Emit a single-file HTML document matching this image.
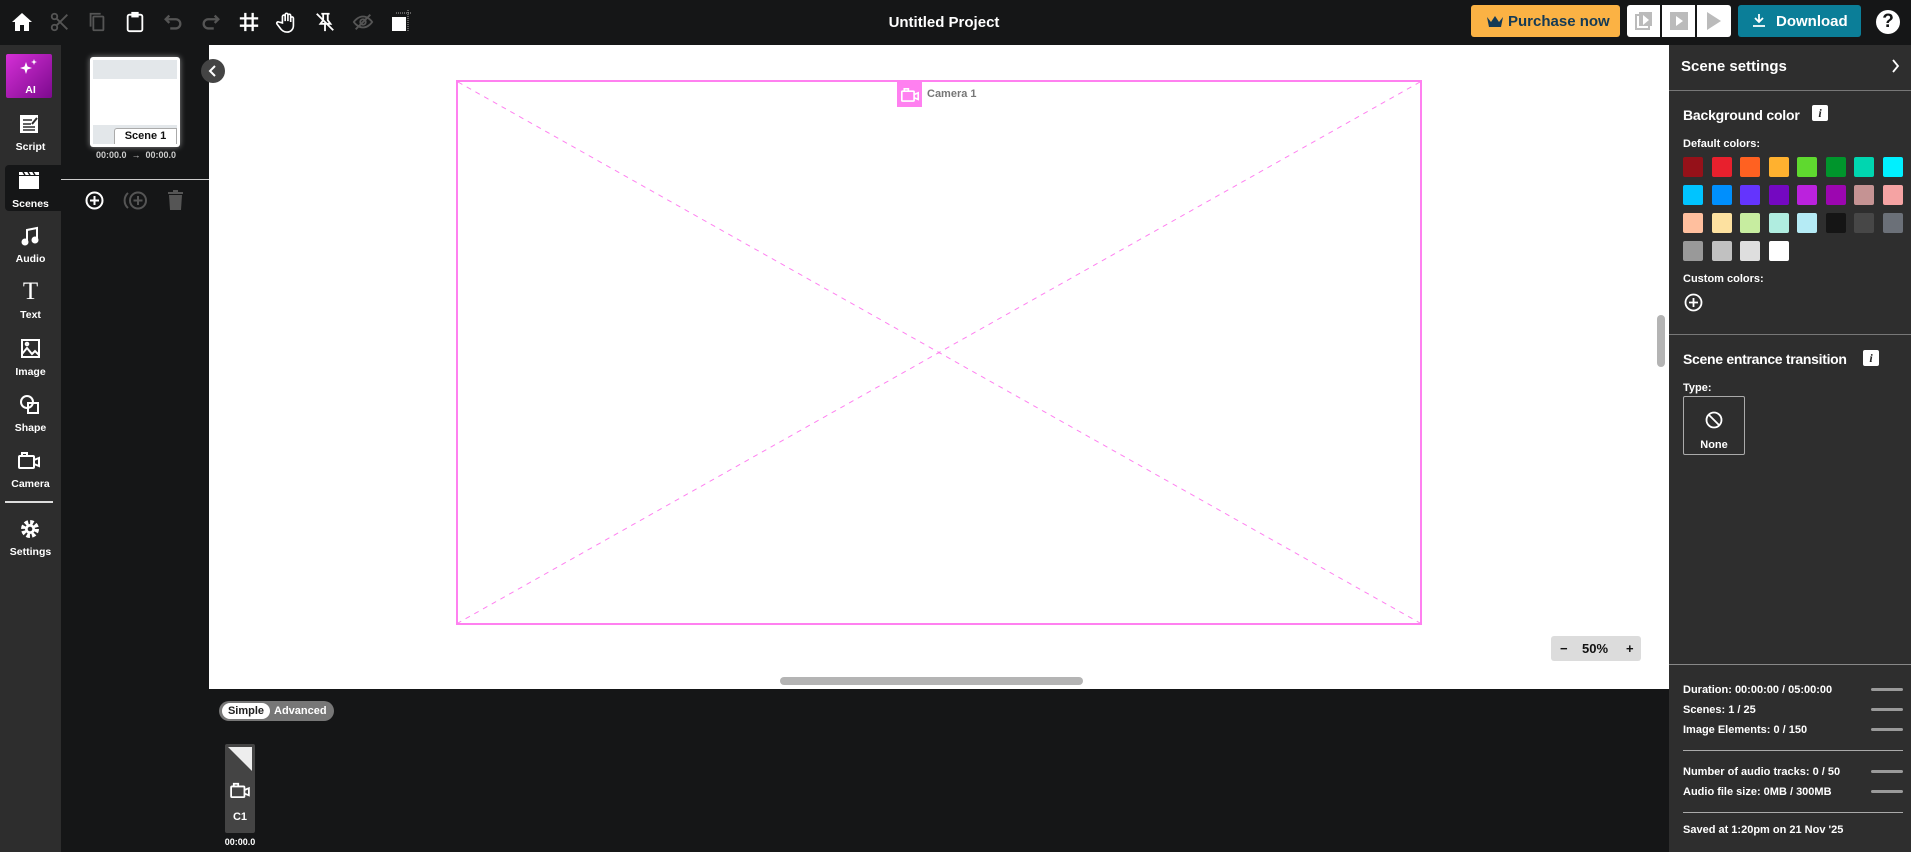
<!DOCTYPE html>
<html><head><meta charset="utf-8"><style>
*{margin:0;padding:0;box-sizing:border-box}
body{width:1911px;height:852px;overflow:hidden;background:#151617;font-family:"Liberation Sans",sans-serif;color:#fff;position:relative}
.a{position:absolute}
.b{font-weight:bold}
.lbl{position:absolute;width:61px;text-align:center;font-size:10.5px;font-weight:bold;left:0}
.sw{position:absolute;width:20px;height:20px;border-radius:2px}
.st{position:absolute;left:1683px;font-size:11px;font-weight:bold}
.bar{position:absolute;left:1871px;width:32px;height:3px;background:#9a9a9a;border-radius:2px}
svg{position:absolute;overflow:visible}
</style></head><body>
<!-- top bar -->
<div class="a" style="left:0;top:0;width:1911px;height:45px;background:#151617"></div>
<svg style="left:10px;top:10px" width="24" height="24" viewBox="0 0 24 24"><path d="M12 3L2 12h3v9h5v-6h4v6h5v-9h3z" fill="#fff"/></svg>
<svg style="left:49px;top:11px" width="22" height="22" viewBox="0 0 24 24" fill="none" stroke="#555" stroke-width="2"><circle cx="6" cy="6" r="3"/><circle cx="6" cy="18" r="3"/><path d="M8 8l12 12M8 16L20 4"/></svg>
<svg style="left:86px;top:11px" width="22" height="22" viewBox="0 0 24 24" fill="none" stroke="#555" stroke-width="2"><rect x="8" y="6" width="11" height="15" rx="1"/><path d="M5 17V3h11"/></svg>
<svg style="left:124px;top:10px" width="22" height="24" viewBox="0 0 24 24" fill="none" stroke="#fff" stroke-width="2"><rect x="4" y="4" width="16" height="18" rx="2"/><rect x="9" y="2" width="6" height="4" fill="#fff"/></svg>
<svg style="left:162px;top:11px" width="22" height="22" viewBox="0 0 24 24" fill="none" stroke="#555" stroke-width="2.5"><path d="M4 9h11a5 5 0 010 10H9"/><path d="M8 5L4 9l4 4"/></svg>
<svg style="left:200px;top:11px" width="22" height="22" viewBox="0 0 24 24" fill="none" stroke="#555" stroke-width="2.5"><path d="M20 9H9a5 5 0 000 10h6"/><path d="M16 5l4 4-4 4"/></svg>
<svg style="left:238px;top:11px" width="22" height="22" viewBox="0 0 24 24" fill="none" stroke="#fff" stroke-width="2.5"><path d="M8 2v20M16 2v20M2 8h20M2 16h20"/></svg>
<svg style="left:276px;top:10px" width="22" height="24" viewBox="0 0 24 24" fill="none" stroke="#fff" stroke-width="1.8"><path d="M7 13V6a1.5 1.5 0 013 0v5V4a1.5 1.5 0 013 0v7V5a1.5 1.5 0 013 0v7V8a1.5 1.5 0 013 0v8c0 4-3 7-7 7s-6-2-8-5l-3-4a1.5 1.5 0 012-2z"/></svg>
<svg style="left:314px;top:10px" width="22" height="24" viewBox="0 0 24 24" fill="none" stroke="#fff" stroke-width="2"><path d="M8 3h9M10 3v7l-3 4h11l-3-4V3M12 14v8M3 3l18 18"/></svg>
<svg style="left:352px;top:11px" width="22" height="22" viewBox="0 0 24 24" fill="none" stroke="#555" stroke-width="2"><path d="M2 12s4-6 10-6 10 6 10 6-4 6-10 6S2 12 2 12z"/><circle cx="12" cy="12" r="3"/><path d="M4 20L20 4"/></svg>
<svg style="left:389px;top:10px" width="24" height="24" viewBox="0 0 24 24"><rect x="3" y="7" width="14" height="14" fill="#fff"/><path d="M7 3h16M19 0v21" stroke="#aaa" stroke-width="1" stroke-dasharray="1 1"/></svg>
<div class="a b" style="left:844px;top:14px;width:200px;text-align:center;font-size:15px">Untitled Project</div>
<div class="a b" style="left:1471px;top:5px;width:149px;height:32px;background:#fbb244;border-radius:3px;color:#153a55;font-size:15px;line-height:33px;padding-left:37px">Purchase now</div>
<svg style="left:1486px;top:15px" width="18" height="13" viewBox="0 0 18 13"><path d="M1 2l4 5 4-6 4 6 4-5-2 10H3z" fill="#153a55"/></svg>
<div class="a" style="left:1627px;top:5px;width:33px;height:32px;background:#fff;border-radius:3px 0 0 3px"></div>
<div class="a" style="left:1662px;top:5px;width:33px;height:32px;background:#fff"></div>
<div class="a" style="left:1697px;top:5px;width:34px;height:32px;background:#fff;border-radius:0 3px 3px 0"></div>
<svg style="left:1635px;top:11px" width="18" height="20" viewBox="0 0 18 20"><rect x="4" y="1" width="13" height="14" fill="#bbb"/><rect x="1" y="4" width="13" height="14" fill="none" stroke="#bbb" stroke-width="2"/><path d="M8 4l6 5-6 5z" fill="#fff"/></svg>
<svg style="left:1670px;top:12px" width="18" height="18" viewBox="0 0 18 18"><rect width="18" height="18" fill="#bbb"/><path d="M6 4l7 5-7 5z" fill="#fff"/></svg>
<svg style="left:1706px;top:11px" width="16" height="20" viewBox="0 0 16 20"><path d="M1 1l14 9-14 9z" fill="#bbb"/></svg>
<div class="a b" style="left:1738px;top:5px;width:123px;height:32px;background:#0b7e98;border-radius:3px;font-size:15px;line-height:33px;padding-left:38px">Download</div>
<svg style="left:1752px;top:13px" width="14" height="14" viewBox="0 0 14 14" fill="none" stroke="#fff" stroke-width="1.8"><path d="M7 1v8M3 5l4 4 4-4M1 13h12"/></svg>
<div class="a b" style="left:1876px;top:10px;width:24px;height:24px;border-radius:50%;background:#fff;color:#151617;font-size:19px;line-height:24px;text-align:center">?</div>

<!-- left sidebar -->
<div class="a" style="left:0;top:45px;width:61px;height:807px;background:#2d2d2d"></div>
<div class="a" style="left:6px;top:54px;width:46px;height:44px;border-radius:2px;background:linear-gradient(135deg,#d52fd6,#7c0a8e)"></div>
<svg style="left:19px;top:58px" width="20" height="18" viewBox="0 0 20 18" fill="#fff"><path d="M7 4l1.5 4.5L13 10l-4.5 1.5L7 16l-1.5-4.5L1 10l4.5-1.5z"/><path d="M15 1l.8 2.2L18 4l-2.2.8L15 7l-.8-2.2L12 4l2.2-.8z"/></svg>
<div class="lbl" style="left:0;top:84px">AI</div>
<svg style="left:20px;top:115px" width="19" height="18" viewBox="0 0 19 18"><rect width="18" height="18" fill="#fff"/><path d="M3 5h9M3 9h8M3 12h12M3 15h12" stroke="#2d2d2d" stroke-width="1.5"/><path d="M12 9l5-6" stroke="#2d2d2d" stroke-width="2"/></svg>
<div class="lbl" style="top:141px">Script</div>
<div class="a" style="left:5px;top:165px;width:56px;height:46px;background:#151617;border-radius:4px 0 0 4px"></div>
<svg style="left:19px;top:172px" width="20" height="17" viewBox="0 0 20 17"><rect y="4" width="20" height="13" fill="#fff"/><path d="M0 0h20v3H0z" fill="#fff"/><path d="M4 0l2 3M9 0l2 3M14 0l2 3" stroke="#151617" stroke-width="1.5"/></svg>
<div class="lbl" style="top:198px">Scenes</div>
<svg style="left:21px;top:227px" width="18" height="19" viewBox="0 0 18 19" fill="none" stroke="#fff" stroke-width="2"><path d="M6 15V3l10-2v12"/><circle cx="4" cy="15" r="2.5" fill="#fff"/><circle cx="14" cy="13" r="2.5" fill="#fff"/></svg>
<div class="lbl" style="top:253px">Audio</div>
<div class="a" style="left:0;top:278px;width:61px;text-align:center;font-family:'Liberation Serif',serif;font-size:25px">T</div>
<div class="lbl" style="top:309px">Text</div>
<svg style="left:21px;top:339px" width="19" height="19" viewBox="0 0 19 19" fill="none" stroke="#fff" stroke-width="2"><rect x="1" y="1" width="17" height="17"/><path d="M1 15l5-6 5 6 3-3 4 4"/><circle cx="6" cy="5" r="1.3"/></svg>
<div class="lbl" style="top:366px">Image</div>
<svg style="left:20px;top:395px" width="20" height="20" viewBox="0 0 20 20" fill="none" stroke="#fff" stroke-width="2"><circle cx="7" cy="7" r="6"/><rect x="8" y="8" width="10" height="10"/></svg>
<div class="lbl" style="top:422px">Shape</div>
<svg style="left:18px;top:451px" width="22" height="18" viewBox="0 0 22 18" fill="none" stroke="#fff" stroke-width="2"><rect x="1" y="5" width="15" height="12" rx="1"/><path d="M4 5V2h5v3M16 9l5-2v8l-5-2"/></svg>
<div class="lbl" style="top:478px">Camera</div>
<div class="a" style="left:5px;top:501px;width:48px;height:2px;background:#ddd"></div>
<svg style="left:20px;top:519px" width="20" height="20" viewBox="0 0 20 20"><circle cx="10" cy="10" r="6.5" fill="none" stroke="#fff" stroke-width="5" stroke-dasharray="3.2 1.9"/><circle cx="10" cy="10" r="5" fill="#fff"/><circle cx="10" cy="10" r="2.3" fill="#2d2d2d"/></svg>
<div class="lbl" style="top:546px">Settings</div>

<!-- scenes panel -->
<div class="a" style="left:90px;top:57px;width:90px;height:90px;background:#fff;border-radius:3px;box-shadow:0 0 6px rgba(255,255,255,.5)"></div>
<div class="a" style="left:93px;top:60px;width:84px;height:19px;background:#e3e7ea"></div>
<div class="a" style="left:93px;top:125px;width:84px;height:19px;background:#e3e7ea"></div>
<div class="a b" style="left:114px;top:128px;width:63px;height:16px;background:#fff;border:1px solid #aaa;border-bottom:none;border-radius:3px 0 0 0;color:#111;font-size:11px;text-align:center;line-height:15px">Scene 1</div>
<div class="a b" style="left:90px;top:150px;width:92px;font-size:9px;color:#ccc;text-align:center">00:00.0 &nbsp;→&nbsp; 00:00.0</div>
<div class="a" style="left:61px;top:179px;width:148px;height:1px;background:#ccc"></div>
<svg style="left:85px;top:191px" width="19" height="19" viewBox="0 0 19 19" fill="none" stroke="#fff" stroke-width="2"><circle cx="9.5" cy="9.5" r="8"/><path d="M9.5 5v9M5 9.5h9"/></svg>
<svg style="left:124px;top:191px" width="24" height="19" viewBox="0 0 24 19" fill="none" stroke="#555" stroke-width="2"><circle cx="14" cy="9.5" r="8"/><path d="M14 5v9M9.5 9.5h9M4 2a10 10 0 000 15"/></svg>
<svg style="left:168px;top:190px" width="15" height="20" viewBox="0 0 15 20" fill="#555"><rect x="0" y="2" width="15" height="2"/><rect x="5" y="0" width="5" height="2"/><path d="M1 5h13l-1 15H2z"/></svg>

<!-- canvas -->
<div class="a" style="left:209px;top:45px;width:1460px;height:644px;background:#fff"></div>
<div class="a" style="left:201px;top:59px;width:24px;height:24px;border-radius:50%;background:#444"></div>
<svg style="left:208px;top:65px" width="10" height="12" viewBox="0 0 10 12" fill="none" stroke="#fff" stroke-width="2"><path d="M7 1L2 6l5 5"/></svg>
<svg style="left:456px;top:80px" width="966" height="545" viewBox="0 0 966 545"><rect x="1" y="1" width="964" height="543" fill="none" stroke="#ff80f0" stroke-width="2"/><path d="M2 2L964 543M964 2L2 543" stroke="#ff80f0" stroke-width="1" stroke-dasharray="5 5"/></svg>
<div class="a" style="left:897px;top:82px;width:25px;height:25px;background:#ff80f0"></div>
<svg style="left:901px;top:87px" width="18" height="15" viewBox="0 0 22 18" fill="none" stroke="#fff" stroke-width="2"><rect x="1" y="5" width="15" height="12" rx="1"/><path d="M4 5V2h5v3M16 9l5-2v8l-5-2"/></svg>
<div class="a b" style="left:927px;top:88px;font-size:11px;color:#777">Camera 1</div>
<div class="a b" style="left:1551px;top:636px;width:90px;height:25px;background:#dcdcdc;border-radius:3px;color:#111;font-size:13px;line-height:25px">
<span class="a" style="left:9px">−</span><span class="a" style="left:31px">50%</span><span class="a" style="left:75px">+</span></div>
<div class="a" style="left:780px;top:677px;width:303px;height:8px;border-radius:4px;background:#b4b4b4"></div>
<div class="a" style="left:1657px;top:315px;width:8px;height:52px;border-radius:4px;background:#b4b4b4"></div>

<!-- bottom timeline -->
<div class="a" style="left:219px;top:701px;width:115px;height:20px;border-radius:10px;background:#777"></div>
<div class="a b" style="left:222px;top:703px;width:48px;height:16px;border-radius:8px;background:#fff;color:#222;font-size:11px;text-align:center;line-height:16px">Simple</div>
<div class="a b" style="left:274px;top:703px;font-size:11px;line-height:16px;color:#fff">Advanced</div>
<div class="a" style="left:225px;top:744px;width:30px;height:89px;background:#444;border-radius:2px"></div>
<svg style="left:228px;top:747px" width="24" height="24" viewBox="0 0 24 24"><path d="M0 0h24v24z" fill="#eee"/></svg>
<svg style="left:230px;top:782px" width="20" height="16" viewBox="0 0 22 18" fill="none" stroke="#fff" stroke-width="2"><rect x="1" y="5" width="15" height="12" rx="1"/><path d="M4 5V2h5v3M16 9l5-2v8l-5-2"/></svg>
<div class="a b" style="left:225px;top:811px;width:30px;text-align:center;font-size:11px">C1</div>
<div class="a b" style="left:215px;top:837px;width:50px;text-align:center;font-size:9px">00:00.0</div>

<!-- right panel -->
<div class="a" style="left:1669px;top:45px;width:242px;height:807px;background:#2e2e2e"></div>
<div class="a b" style="left:1681px;top:58px;font-size:15px">Scene settings</div>
<svg style="left:1891px;top:59px" width="9" height="14" viewBox="0 0 9 14" fill="none" stroke="#fff" stroke-width="1.8"><path d="M2 1l5 6-5 6"/></svg>
<div class="a" style="left:1669px;top:90px;width:242px;height:1px;background:#777"></div>
<div class="a b" style="left:1683px;top:107px;font-size:14px;letter-spacing:-0.2px">Background color</div>
<div class="a b" style="left:1812px;top:105px;width:16px;height:16px;background:#fff;border-radius:2px;color:#222;font-family:'Liberation Serif',serif;font-style:italic;font-size:12px;text-align:center;line-height:16px">i</div>
<div class="a b" style="left:1683px;top:138px;font-size:11px">Default colors:</div>
<div class="sw" style="left:1683px;top:157px;background:#951119"></div><div class="sw" style="left:1712px;top:157px;background:#e8202d"></div><div class="sw" style="left:1740px;top:157px;background:#ff6121"></div><div class="sw" style="left:1769px;top:157px;background:#ffb12f"></div><div class="sw" style="left:1797px;top:157px;background:#5fd92f"></div><div class="sw" style="left:1826px;top:157px;background:#00952c"></div><div class="sw" style="left:1854px;top:157px;background:#00d6b0"></div><div class="sw" style="left:1883px;top:157px;background:#00f0ff"></div>
<div class="sw" style="left:1683px;top:185px;background:#00c4ff"></div><div class="sw" style="left:1712px;top:185px;background:#008ffd"></div><div class="sw" style="left:1740px;top:185px;background:#6434fd"></div><div class="sw" style="left:1769px;top:185px;background:#7408c1"></div><div class="sw" style="left:1797px;top:185px;background:#bb22dd"></div><div class="sw" style="left:1826px;top:185px;background:#9c06b0"></div><div class="sw" style="left:1854px;top:185px;background:#c59393"></div><div class="sw" style="left:1883px;top:185px;background:#f5a3a3"></div>
<div class="sw" style="left:1683px;top:213px;background:#ffbf9e"></div><div class="sw" style="left:1712px;top:213px;background:#fde1a0"></div><div class="sw" style="left:1740px;top:213px;background:#c7eda0"></div><div class="sw" style="left:1769px;top:213px;background:#b0ede0"></div><div class="sw" style="left:1797px;top:213px;background:#b5ebf5"></div><div class="sw" style="left:1826px;top:213px;background:#151515"></div><div class="sw" style="left:1854px;top:213px;background:#474747"></div><div class="sw" style="left:1883px;top:213px;background:#6b7078"></div>
<div class="sw" style="left:1683px;top:241px;background:#999"></div><div class="sw" style="left:1712px;top:241px;background:#c1c1c1"></div><div class="sw" style="left:1740px;top:241px;background:#dedede"></div><div class="sw" style="left:1769px;top:241px;background:#fff"></div>
<div class="a b" style="left:1683px;top:273px;font-size:11px">Custom colors:</div>
<svg style="left:1684px;top:293px" width="19" height="19" viewBox="0 0 19 19" fill="none" stroke="#fff" stroke-width="1.8"><circle cx="9.5" cy="9.5" r="8"/><path d="M9.5 5v9M5 9.5h9"/></svg>
<div class="a" style="left:1669px;top:334px;width:242px;height:1px;background:#777"></div>
<div class="a b" style="left:1683px;top:351px;font-size:14px;letter-spacing:-0.3px">Scene entrance transition</div>
<div class="a b" style="left:1863px;top:350px;width:16px;height:16px;background:#fff;border-radius:2px;color:#222;font-family:'Liberation Serif',serif;font-style:italic;font-size:12px;text-align:center;line-height:16px">i</div>
<div class="a b" style="left:1683px;top:382px;font-size:11px">Type:</div>
<div class="a" style="left:1683px;top:396px;width:62px;height:59px;border:1px solid #aaa;border-radius:2px"></div>
<svg style="left:1705px;top:411px" width="18" height="18" viewBox="0 0 18 18" fill="none" stroke="#fff" stroke-width="1.8"><circle cx="9" cy="9" r="7.5"/><path d="M4 4l10 10"/></svg>
<div class="a b" style="left:1683px;top:439px;width:62px;text-align:center;font-size:11px">None</div>

<div class="a" style="left:1669px;top:664px;width:242px;height:1px;background:#888"></div>
<div class="st" style="top:684px">Duration: 00:00:00 / 05:00:00</div><div class="bar" style="top:688px"></div>
<div class="st" style="top:704px">Scenes: 1 / 25</div><div class="bar" style="top:708px"></div>
<div class="st" style="top:724px">Image Elements: 0 / 150</div><div class="bar" style="top:728px"></div>
<div class="a" style="left:1683px;top:750px;width:220px;height:1px;background:#aaa"></div>
<div class="st" style="top:766px">Number of audio tracks: 0 / 50</div><div class="bar" style="top:770px"></div>
<div class="st" style="top:786px">Audio file size: 0MB / 300MB</div><div class="bar" style="top:790px"></div>
<div class="a" style="left:1683px;top:812px;width:220px;height:1px;background:#aaa"></div>
<div class="st" style="top:824px">Saved at 1:20pm on 21 Nov '25</div>
</body></html>
